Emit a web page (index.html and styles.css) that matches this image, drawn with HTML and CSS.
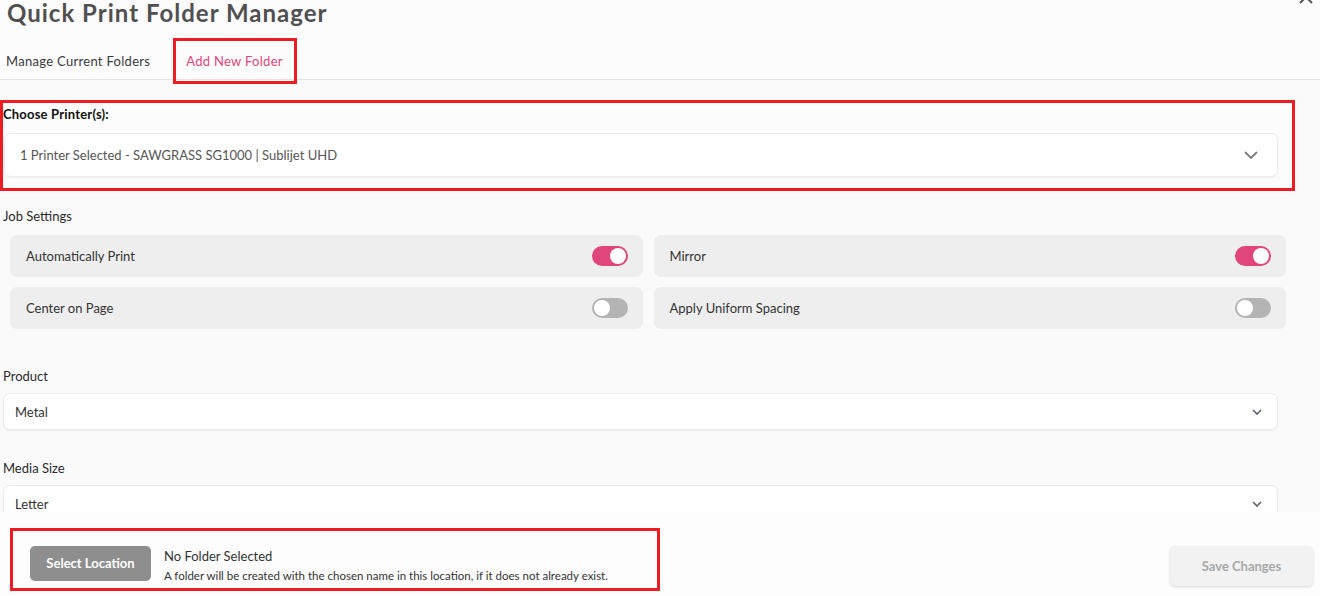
FILE: index.html
```html
<!DOCTYPE html>
<html lang="en">

<head>
    <meta charset="UTF-8">
    <meta name="viewport" content="width=device-width, initial-scale=1.0">
    <title>Quick Print Folder Manager</title>
    <link rel="stylesheet" href="styles.css">
</head>

<body>
    <div class="manager">
        <div class="manager-header">
            <h1 class="manager-title">Quick Print Folder Manager</h1>
            <a class="close-btn" href="javascript:;">
                <svg width="16" height="16" viewBox="0 0 16 16"><path d="M2 2 L14 14 M14 2 L2 14" stroke="#555" stroke-width="2" fill="none"/></svg>
            </a>
        </div>
        <div class="tabs">
            <a class="tab" href="javascript:;">Manage Current Folders</a>
            <a class="tab tab-active marked" href="javascript:;">Add New Folder</a>
        </div>

        <div class="manager-body">
            <!-- 打印机选择 -->
            <div class="printer-box">
                <div class="field-label strong">Choose Printer(s):</div>
                <div class="select select-printer">
                    <span>1 Printer Selected - SAWGRASS SG1000 | Sublijet UHD</span>
                    <svg width="14" height="8" viewBox="0 0 14 8"><polyline points="1,1 7,7 13,1" stroke="#7a7a7a" stroke-width="1.8" fill="none"/></svg>
                </div>
            </div>

            <div class="field-label job-label">Job Settings</div>
            <div class="settings-grid">
                <div class="setting"><span>Automatically Print</span><span class="toggle on"></span></div>
                <div class="setting"><span>Mirror</span><span class="toggle on"></span></div>
                <div class="setting"><span>Center on Page</span><span class="toggle"></span></div>
                <div class="setting"><span>Apply Uniform Spacing</span><span class="toggle"></span></div>
            </div>

            <div class="field-label product-label">Product</div>
            <div class="select select-small">
                <span>Metal</span>
                <svg width="10" height="6" viewBox="0 0 10 6"><polyline points="1,1 5,5 9,1" stroke="#5a5f6a" stroke-width="1.6" fill="none"/></svg>
            </div>

            <div class="field-label media-label">Media Size</div>
            <div class="select select-small">
                <span>Letter</span>
                <svg width="10" height="6" viewBox="0 0 10 6"><polyline points="1,1 5,5 9,1" stroke="#5a5f6a" stroke-width="1.6" fill="none"/></svg>
            </div>
        </div>

        <div class="manager-footer">
            <div class="location-box">
                <a class="btn-location" href="javascript:;">Select Location</a>
                <div class="location-info">
                    <div class="location-name">No Folder Selected</div>
                    <div class="location-note">A folder will be created with the chosen name in this location, if it does not already exist.</div>
                </div>
            </div>
            <a class="btn-save" href="javascript:;">Save Changes</a>
        </div>
    </div>
</body>

</html>
```

FILE: styles.css
```css
body {
    margin: 0;
    padding: 0;
    background: #fafafa;
    font-family: "Lato", "Liberation Sans", sans-serif;
    color: #333;
}

a {
    text-decoration: none;
}

.manager {
    width: 1320px;
    height: 596px;
    overflow: hidden;
    display: flex;
    flex-direction: column;
    position: relative;
    background: #fcfcfc;
}

.manager-header {
    height: 38px;
    padding-left: 7px;
}

.manager-title {
    margin: -1px 0 0 0;
    font-size: 24px;
    line-height: 28px;
    font-weight: 700;
    letter-spacing: 1px;
    color: #505050;
}

.close-btn {
    position: absolute;
    right: 6px;
    top: -11px;
}

.tabs {
    display: flex;
    height: 41px;
    border-bottom: 1px solid #e4e4e4;
    flex-shrink: 0;
}

.tab {
    position: relative;
    display: flex;
    align-items: center;
    padding: 4px 23px 0 6px;
    font-size: 13px;
    letter-spacing: 0.3px;
    color: #3a3a3a;
}

.tab-active {
    padding: 4px 14px 0 13px;
    color: #e0457b;
}

/* 红色标注框 */
.marked::after {
    content: "";
    position: absolute;
    left: 0;
    right: 0;
    top: 0;
    bottom: -5px;
    border: 3px solid #ed1c24;
}

.manager-body {
    flex: 1;
    overflow: hidden;
    padding-top: 20px;
    background: #fafafa;
}

.printer-box {
    margin-right: 25px;
    border: 3px solid #ed1c24;
    padding: 3px 14px 11px 0;
    background: #fcfcfc;
}

.field-label {
    font-size: 13px;
    line-height: 16px;
    color: #2a2a2a;
    padding-left: 3px;
}

.field-label.strong {
    padding-left: 0;
    font-weight: 700;
    letter-spacing: 0.2px;
    color: #111;
}

.select {
    display: flex;
    align-items: center;
    justify-content: space-between;
    background: #fff;
    border: 1px solid #ececec;
    border-radius: 7px;
    box-shadow: 0 1px 2px rgba(0, 0, 0, .06);
    font-size: 13px;
    color: #333;
}

.select-printer {
    height: 42px;
    margin: 11px 0 0 1px;
    padding: 0 19px 0 15px;
    color: #555;
}

.select-small {
    height: 35px;
    margin: 9px 42px 0 3px;
    padding: 0 15px 0 11px;
}

.job-label {
    margin-top: 17px;
}

.settings-grid {
    display: grid;
    grid-template-columns: 1fr 1fr;
    column-gap: 11px;
    row-gap: 10px;
    margin: 11px 34px 0 10px;
}

.setting {
    height: 42px;
    display: flex;
    align-items: center;
    justify-content: space-between;
    padding: 0 15px 0 16px;
    background: #eeeeee;
    border-radius: 7px;
    font-size: 13px;
    color: #333;
}

.toggle {
    position: relative;
    width: 36px;
    height: 20px;
    border-radius: 10px;
    background: #b4b4b4;
}

.toggle::after {
    content: "";
    position: absolute;
    left: 2px;
    top: 2px;
    width: 16px;
    height: 16px;
    border-radius: 50%;
    background: #fff;
}

.toggle.on {
    background: #e0457b;
}

.toggle.on::after {
    left: 18px;
}

.product-label {
    margin-top: 39px;
}

.media-label {
    margin-top: 30px;
}

.manager-footer {
    height: 84px;
    flex-shrink: 0;
    display: flex;
    justify-content: space-between;
    align-items: flex-start;
    background: #fdfdfd;
}

.location-box {
    display: flex;
    align-items: flex-start;
    width: 627px;
    height: 42px;
    margin: 16px 0 0 10px;
    border: 3px solid #ed1c24;
    padding: 15px 0 0 17px;
}

.btn-location {
    width: 121px;
    height: 35px;
    line-height: 35px;
    text-align: center;
    background: #8e8e8e;
    border-radius: 5px;
    color: #fff;
    font-size: 13px;
    font-weight: 700;
}

.location-info {
    margin-left: 13px;
    padding-top: 2px;
}

.location-name {
    font-size: 13px;
    line-height: 16px;
    color: #333;
}

.location-note {
    margin-top: 5px;
    font-size: 11.5px;
    line-height: 14px;
    color: #333;
}

.btn-save {
    width: 143px;
    height: 40px;
    line-height: 40px;
    margin: 34px 7px 0 0;
    text-align: center;
    background: #f2f2f2;
    border-radius: 5px;
    box-shadow: 0 1px 3px rgba(0, 0, 0, .15);
    color: #a8a8a8;
    font-size: 13px;
    font-weight: 700;
}
```
